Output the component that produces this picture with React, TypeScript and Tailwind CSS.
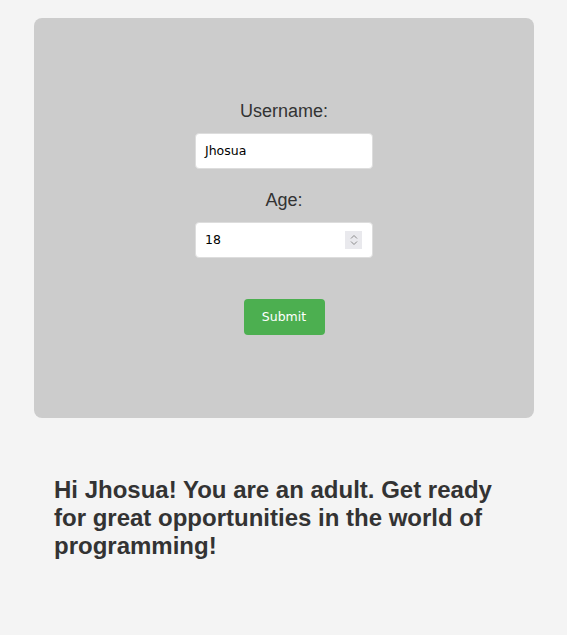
import React from "react";

export default function App() {
  return (
    <div className="min-h-[635px] w-full bg-[#f4f4f4] pt-[18px]" style={{ fontFamily: '"Liberation Sans", Arial, sans-serif' }}>
      <div className="ml-[34px] w-[500px]">
        <div className="flex h-[400px] flex-col items-center rounded-[8px] bg-[#cccccc] pt-[83px]">
          <label className="block h-[21px] text-[18px] leading-[21px] text-[#333333]">Username:</label>
          <div className="mt-[11px] flex h-[36px] w-[178px] items-center rounded-[4px] border border-[#dddddd] bg-white pl-[9px]">
            <span className="text-[12.5px] text-black" style={{ fontFamily: '"DejaVu Sans", sans-serif' }}>Jhosua</span>
          </div>
          <label className="mt-[21px] block h-[21px] text-[18px] leading-[21px] text-[#333333]">Age:</label>
          <div className="relative mt-[11px] flex h-[36px] w-[178px] items-center rounded-[4px] border border-[#dddddd] bg-white pl-[9px]">
            <span className="text-[12.5px] text-black" style={{ fontFamily: '"DejaVu Sans", sans-serif' }}>18</span>
            <div className="absolute right-[10px] top-[8px] flex h-[18px] w-[17px] flex-col items-center justify-center gap-[2px] bg-[#e9e9ed]">
              <svg width="8" height="5" viewBox="0 0 8 5"><path d="M1 4.5 L4 1.5 L7 4.5" fill="none" stroke="#8a8a8a" strokeWidth="1" /></svg>
              <svg width="8" height="5" viewBox="0 0 8 5"><path d="M1 0.5 L4 3.5 L7 0.5" fill="none" stroke="#8a8a8a" strokeWidth="1" /></svg>
            </div>
          </div>
          <button className="mt-[41px] flex h-[36px] w-[81px] items-center justify-center rounded-[4px] bg-[#4caf50] text-[12.5px] text-white" style={{ fontFamily: '"DejaVu Sans", sans-serif' }}>
            Submit
          </button>
        </div>
        <h2 className="mt-[58px] px-[20px] text-[24px] font-bold leading-[28px] text-[#333333]">
          Hi Jhosua! You are an adult. Get ready for great opportunities in the world of programming!
        </h2>
      </div>
    </div>
  );
}
